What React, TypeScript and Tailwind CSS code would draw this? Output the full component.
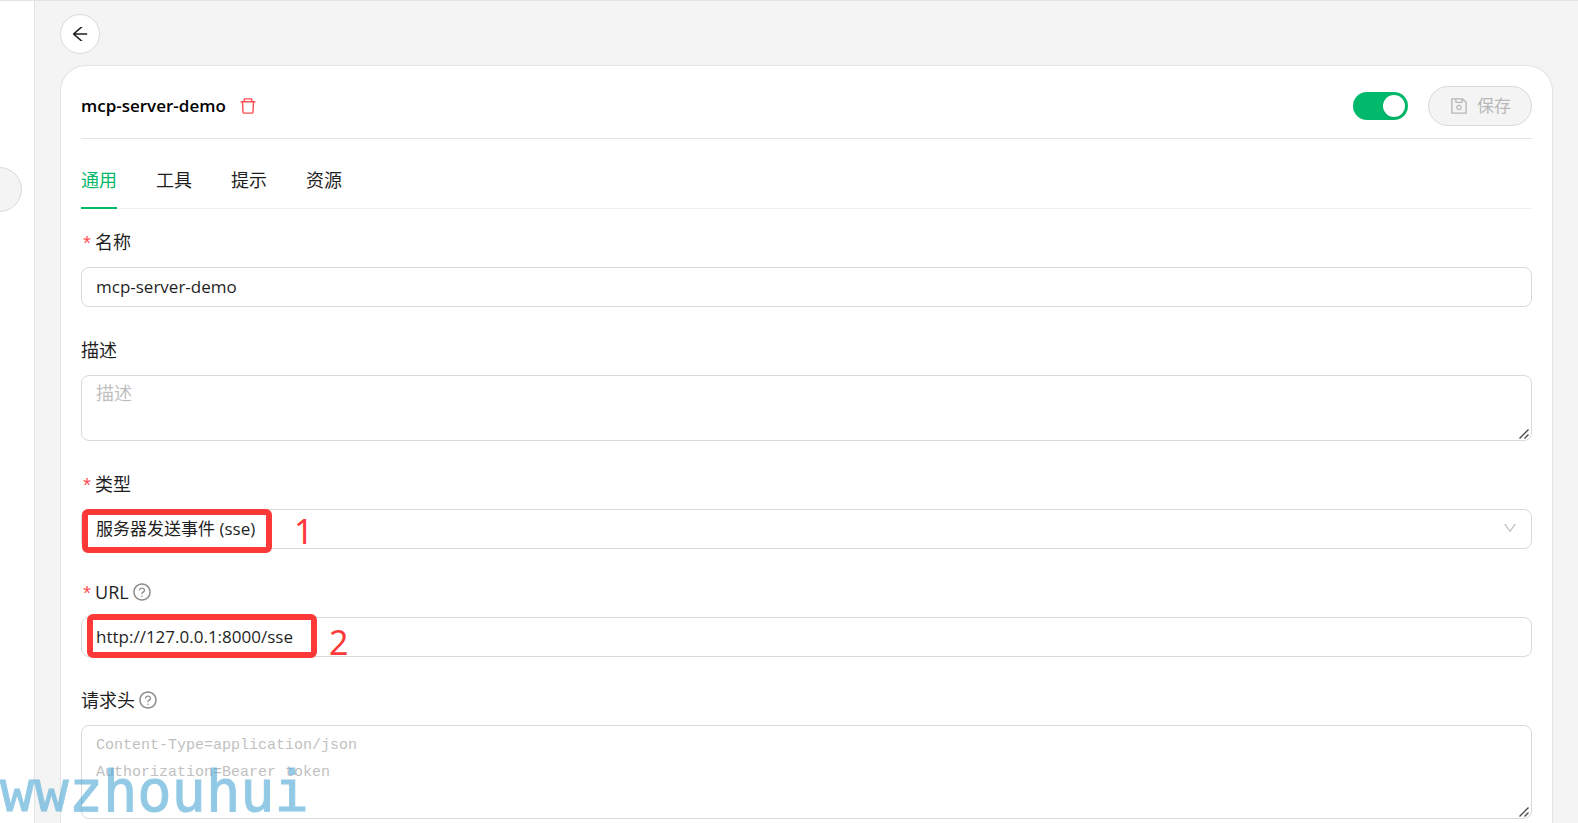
import { useState, type ReactNode } from 'react';
import {
  AiOutlineArrowLeft,
  AiOutlineDelete,
  AiOutlineDown,
  AiOutlineQuestionCircle,
  AiOutlineSave,
} from 'react-icons/ai';

interface FieldProps {
  id: string;
  label: string;
  required?: boolean;
  help?: boolean;
  children: ReactNode;
}

const tabs = ['通用', '工具', '提示', '资源'];

const controlClass =
  'block w-full rounded-lg border border-[#d9d9d9] bg-white px-3.5 text-[#1f1f1f] placeholder:text-[#bfbfbf] focus:outline-none focus:border-[#00b96b]';

function Field({ id, label, required, help, children }: FieldProps) {
  return (
    <div className="flex flex-col gap-3">
      <div className="flex h-[26px] items-center gap-[3px]">
        <label htmlFor={id} className="flex items-center gap-0.5">
          {required && (
            <span className="pt-2 font-['Liberation_Mono',monospace] text-xl leading-5 text-[#ff4d4f]">
              *
            </span>
          )}
          {label}
        </label>
        {help && <AiOutlineQuestionCircle className="size-5 text-[#8c8c8c]" />}
      </div>
      <div className="relative">{children}</div>
    </div>
  );
}

function ResizeGrip() {
  return (
    <svg
      viewBox="0 0 10 10"
      className="pointer-events-none absolute right-[3px] bottom-0.5 size-2.5 text-[#4a4a4a]"
      fill="none"
      stroke="currentColor"
      strokeWidth="1.4"
    >
      <path d="M0.5 9.5 9.5 0.5M5.5 9.5 9.5 5.5" />
    </svg>
  );
}

export default function App() {
  const [activeTab, setActiveTab] = useState(tabs[0]);
  const [enabled, setEnabled] = useState(true);
  const [form, setForm] = useState({
    name: 'mcp-server-demo',
    description: '',
    type: 'sse',
    url: 'http://127.0.0.1:8000/sse',
    headers: '',
  });

  function handleChange(
    e: React.ChangeEvent<HTMLInputElement | HTMLTextAreaElement | HTMLSelectElement>
  ) {
    const { name, value } = e.target;
    setForm((prev) => ({ ...prev, [name]: value }));
  }

  return (
    <div className="relative flex h-screen overflow-hidden border-t border-[#e3e3e3] bg-[#f4f4f4] font-['Open_Sans','Noto_Sans_CJK_SC',sans-serif] text-[17px] leading-7 text-[#1f1f1f]">
      <aside className="relative w-[35px] shrink-0 border-r border-[#e3e3e3] bg-white">
        <div className="absolute top-[166px] right-3 size-[45px] rounded-full border border-[#d9d9d9] bg-[#f4f4f4]" />
      </aside>

      <main className="flex min-w-0 flex-1 flex-col gap-[11px] px-[25px] pt-[13px]">
        <button
          type="button"
          aria-label="返回"
          className="flex size-10 shrink-0 items-center justify-center rounded-full border border-[#d9d9d9] bg-white"
        >
          <AiOutlineArrowLeft className="size-5" />
        </button>

        <section className="shrink-0 rounded-t-[26px] border border-b-0 border-[#e3e3e3] bg-white px-5 pt-5 pb-8">
          <header className="flex items-center justify-between border-b border-[#e3e3e3] pb-3">
            <div className="flex items-center gap-3">
              <h1 className="font-semibold text-black">{form.name}</h1>
              <button type="button" aria-label="删除" className="text-[#ff4d4f]">
                <AiOutlineDelete className="size-5" />
              </button>
            </div>
            <div className="flex items-center gap-5">
              <input
                type="checkbox"
                role="switch"
                aria-label="启用"
                checked={enabled}
                onChange={(e) => setEnabled(e.target.checked)}
                className="h-7 w-[55px] appearance-none rounded-full bg-[#bfbfbf] p-[3px] before:block before:size-[22px] before:rounded-full before:bg-white before:shadow-sm before:content-[''] checked:bg-[#00b96b] checked:before:ml-auto"
              />
              <button
                type="button"
                disabled
                className="flex h-10 items-center gap-2 rounded-full border border-[#d9d9d9] bg-[#f4f4f4] px-5 text-[#b8b8b8]"
              >
                <AiOutlineSave className="size-5" />
                保存
              </button>
            </div>
          </header>

          <nav role="tablist" className="flex gap-[39px] border-b border-[#f0f0f0] pt-[27px] text-lg leading-7">
            {tabs.map((tab) => (
              <button
                key={tab}
                type="button"
                role="tab"
                aria-selected={activeTab === tab}
                onClick={() => setActiveTab(tab)}
                className="-mb-px border-b-2 border-transparent pb-[13px] aria-selected:border-[#00b96b] aria-selected:text-[#00b96b]"
              >
                {tab}
              </button>
            ))}
          </nav>

          <form className="flex flex-col gap-[30px] pt-5 text-lg leading-7">
            <Field id="name" label="名称" required>
              <input
                id="name"
                name="name"
                type="text"
                value={form.name}
                onChange={handleChange}
                className={`${controlClass} h-10 pb-0.5 text-[17px]`}
              />
            </Field>

            <Field id="description" label="描述">
              <textarea
                id="description"
                name="description"
                value={form.description}
                onChange={handleChange}
                placeholder="描述"
                className={`${controlClass} h-[66px] resize-y py-[3px] [&::-webkit-resizer]:hidden`}
              />
              <ResizeGrip />
            </Field>

            <Field id="type" label="类型" required>
              <select
                id="type"
                name="type"
                value={form.type}
                onChange={handleChange}
                className={`${controlClass} h-10 appearance-none text-[17px]`}
              >
                <option value="sse">服务器发送事件 (sse)</option>
              </select>
              <AiOutlineDown className="pointer-events-none absolute top-[11px] right-3.5 size-4 text-[#bfbfbf]" />
              <div className="pointer-events-none absolute top-0 left-px h-11 w-[190px] rounded-md border-6 border-[#fc3838]" />
              <span className="pointer-events-none absolute top-0.5 left-[213px] font-['Noto_Sans',sans-serif] text-[34px] leading-10 text-[#fc3838]">
                1
              </span>
            </Field>

            <Field id="url" label="URL" required help>
              <input
                id="url"
                name="url"
                type="text"
                value={form.url}
                onChange={handleChange}
                className={`${controlClass} h-10 pb-0.5 text-[17px]`}
              />
              <div className="pointer-events-none absolute -top-[3px] left-1.5 h-11 w-[230px] rounded-md border-6 border-[#fc3838]" />
              <span className="pointer-events-none absolute top-[5px] left-[248px] font-['Noto_Sans',sans-serif] text-[34px] leading-10 text-[#fc3838]">
                2
              </span>
            </Field>

            <Field id="headers" label="请求头" help>
              <textarea
                id="headers"
                name="headers"
                value={form.headers}
                onChange={handleChange}
                placeholder={'Content-Type=application/json\nAuthorization=Bearer token'}
                className={`${controlClass} h-[94px] resize-y py-1.5 font-['Liberation_Mono',monospace] text-[15px] leading-[27px] [&::-webkit-resizer]:hidden`}
              />
              <ResizeGrip />
            </Field>
          </form>
        </section>
      </main>

      <div className="pointer-events-none absolute bottom-0 left-0 font-['DejaVu_Sans_Mono',monospace] text-[57px] leading-16 text-[#4ba7d7] opacity-60 [-webkit-text-stroke:1px_#4ba7d7]">
        wwzhouhui
      </div>
    </div>
  );
}
